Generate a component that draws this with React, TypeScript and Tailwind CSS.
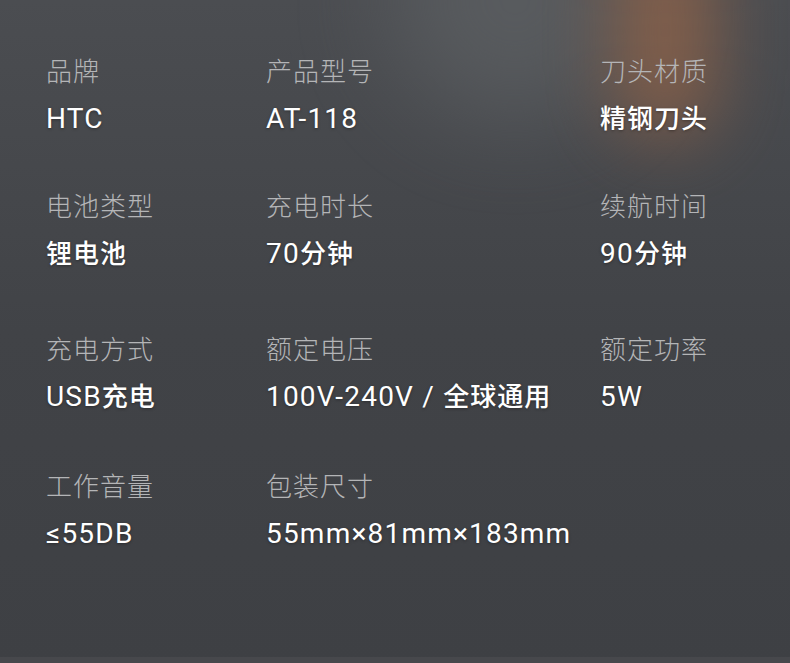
import React from "react";

type Spec = { label: string; value: string };

const rows: { mt: string; items: (Spec | null)[] }[] = [
  {
    mt: "mt-0",
    items: [
      { label: "品牌", value: "HTC" },
      { label: "产品型号", value: "AT-118" },
      { label: "刀头材质", value: "精钢刀头" },
    ],
  },
  {
    mt: "mt-[52px]",
    items: [
      { label: "电池类型", value: "锂电池" },
      { label: "充电时长", value: "70分钟" },
      { label: "续航时间", value: "90分钟" },
    ],
  },
  {
    mt: "mt-[60px]",
    items: [
      { label: "充电方式", value: "USB充电" },
      { label: "额定电压", value: "100V-240V / 全球通用" },
      { label: "额定功率", value: "5W" },
    ],
  },
  {
    mt: "mt-[54px]",
    items: [
      { label: "工作音量", value: "≤55DB" },
      { label: "包装尺寸", value: "55mm×81mm×183mm" },
      null,
    ],
  },
];

function splitRuns(s: string) {
  const runs: { cjk: boolean; text: string }[] = [];
  for (const ch of s) {
    const cjk = /[\u4e00-\u9fff]/.test(ch);
    const last = runs[runs.length - 1];
    if (last && last.cjk === cjk) last.text += ch;
    else runs.push({ cjk, text: ch });
  }
  return runs;
}

function Value({ text }: { text: string }) {
  return (
    <div className="h-[36px] text-[26px] leading-[36px] text-white whitespace-nowrap [text-shadow:0_1px_3px_rgba(0,0,0,0.35)]">
      {splitRuns(text).map((r, i) =>
        r.cjk ? (
          <span
            key={i}
            className="text-[26px] leading-[36px] tracking-[1px] font-medium"
            style={{ fontFamily: '"Noto Sans CJK SC", sans-serif' }}
          >
            {r.text}
          </span>
        ) : (
          <span
            key={i}
            className="text-[28px] leading-[36px] tracking-[1.2px] font-normal whitespace-pre"
            style={{ fontFamily: 'Roboto, "Noto Sans CJK SC", sans-serif' }}
          >
            {r.text}
          </span>
        )
      )}
    </div>
  );
}

export default function App() {
  return (
    <div
      className="relative w-[790px] h-[663px] overflow-hidden bg-gradient-to-b from-[#4b4d51] via-[#414347] to-[#3e4044]"
      style={{ fontFamily: '"Noto Sans CJK SC", "Noto Sans", sans-serif' }}
    >
      {/* decorative glows */}
      <div className="absolute left-[390px] top-[-120px] w-[250px] h-[240px] rounded-full bg-[#5c5f62] blur-[50px] opacity-80" />
      <div className="absolute left-[615px] top-[-80px] w-[100px] h-[220px] rounded-full bg-[#8d6249] blur-[36px] opacity-85" />
      <div className="absolute left-0 right-0 bottom-0 h-[6px] bg-[#47484c]" />

      <div className="relative pt-[52px] pl-[46px]">
        {rows.map((row, ri) => (
          <div key={ri} className={`grid grid-cols-[220px_334px_1fr] ${row.mt}`}>
            {row.items.map((it, ci) => (
              <div key={ci} className="flex flex-col gap-[11px]">
                {it && (
                  <>
                    <div className="text-[26px] leading-[36px] tracking-[1px] font-light text-[#b4b5b7]">
                      {it.label}
                    </div>
                    <Value text={it.value} />
                  </>
                )}
              </div>
            ))}
          </div>
        ))}
      </div>
    </div>
  );
}
